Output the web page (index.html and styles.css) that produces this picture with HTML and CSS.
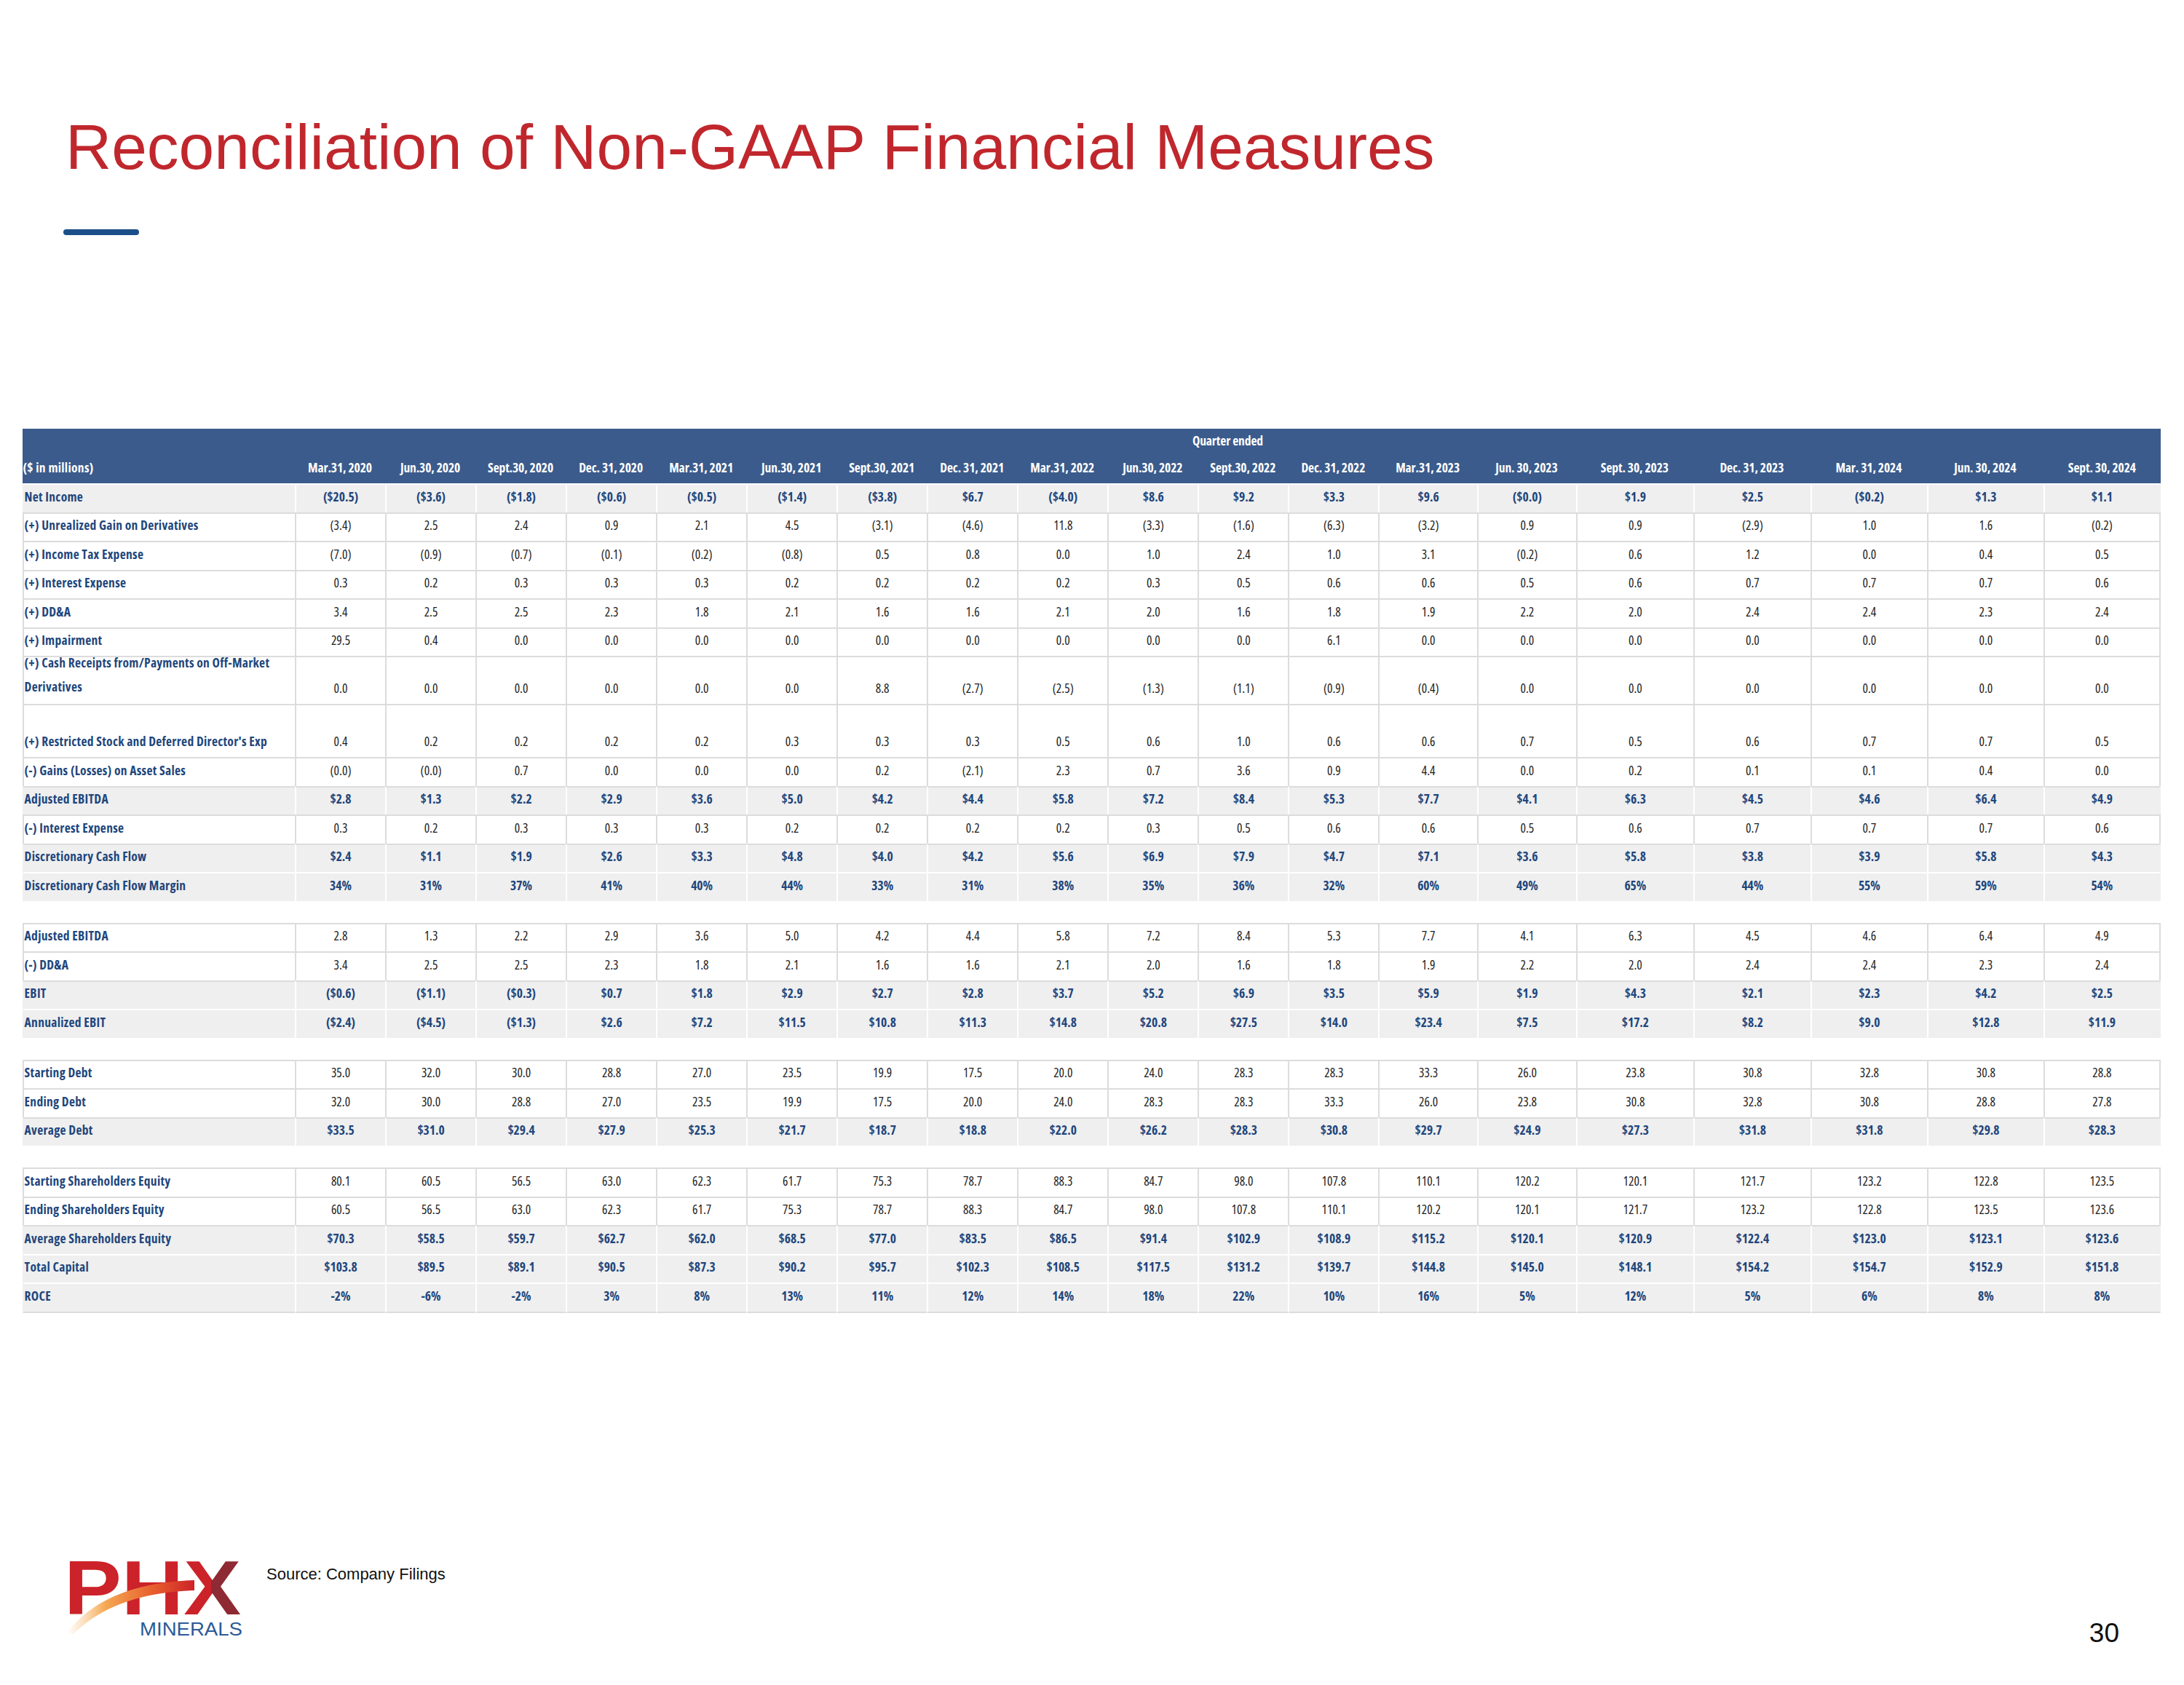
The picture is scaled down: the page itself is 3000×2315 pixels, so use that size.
FILE: index.html
```html
<!DOCTYPE html>
<html lang="en">
<head>
<meta charset="utf-8">
<title>Reconciliation of Non-GAAP Financial Measures</title>
<link rel="stylesheet" href="styles.css">
</head>
<body>
<div class="slide">
  <h1 class="title">Reconciliation of Non-GAAP Financial Measures</h1>
  <div class="rule"></div>

  <div class="tbl">
    <div class="hd">
      <div class="hr1"><div class="qe">Quarter ended</div></div>
      <div class="hr2">
        <div class="l">($ in millions)</div>
        <div>Mar.31, 2020</div><div>Jun.30, 2020</div><div>Sept.30, 2020</div><div>Dec. 31, 2020</div>
        <div>Mar.31, 2021</div><div>Jun.30, 2021</div><div>Sept.30, 2021</div><div>Dec. 31, 2021</div>
        <div>Mar.31, 2022</div><div>Jun.30, 2022</div><div>Sept.30, 2022</div><div>Dec. 31, 2022</div>
        <div>Mar.31, 2023</div><div>Jun. 30, 2023</div><div>Sept. 30, 2023</div><div>Dec. 31, 2023</div>
        <div>Mar. 31, 2024</div><div>Jun. 30, 2024</div><div>Sept. 30, 2024</div>
      </div>
    </div>

    <div class="r g w"><div class="l">Net Income</div><div>($20.5)</div><div>($3.6)</div><div>($1.8)</div><div>($0.6)</div><div>($0.5)</div><div>($1.4)</div><div>($3.8)</div><div>$6.7</div><div>($4.0)</div><div>$8.6</div><div>$9.2</div><div>$3.3</div><div>$9.6</div><div>($0.0)</div><div>$1.9</div><div>$2.5</div><div>($0.2)</div><div>$1.3</div><div>$1.1</div></div>
    <div class="r"><div class="l">(+) Unrealized Gain on Derivatives</div><div>(3.4)</div><div>2.5</div><div>2.4</div><div>0.9</div><div>2.1</div><div>4.5</div><div>(3.1)</div><div>(4.6)</div><div>11.8</div><div>(3.3)</div><div>(1.6)</div><div>(6.3)</div><div>(3.2)</div><div>0.9</div><div>0.9</div><div>(2.9)</div><div>1.0</div><div>1.6</div><div>(0.2)</div></div>
    <div class="r"><div class="l">(+) Income Tax Expense</div><div>(7.0)</div><div>(0.9)</div><div>(0.7)</div><div>(0.1)</div><div>(0.2)</div><div>(0.8)</div><div>0.5</div><div>0.8</div><div>0.0</div><div>1.0</div><div>2.4</div><div>1.0</div><div>3.1</div><div>(0.2)</div><div>0.6</div><div>1.2</div><div>0.0</div><div>0.4</div><div>0.5</div></div>
    <div class="r"><div class="l">(+) Interest Expense</div><div>0.3</div><div>0.2</div><div>0.3</div><div>0.3</div><div>0.3</div><div>0.2</div><div>0.2</div><div>0.2</div><div>0.2</div><div>0.3</div><div>0.5</div><div>0.6</div><div>0.6</div><div>0.5</div><div>0.6</div><div>0.7</div><div>0.7</div><div>0.7</div><div>0.6</div></div>
    <div class="r"><div class="l">(+) DD&amp;A</div><div>3.4</div><div>2.5</div><div>2.5</div><div>2.3</div><div>1.8</div><div>2.1</div><div>1.6</div><div>1.6</div><div>2.1</div><div>2.0</div><div>1.6</div><div>1.8</div><div>1.9</div><div>2.2</div><div>2.0</div><div>2.4</div><div>2.4</div><div>2.3</div><div>2.4</div></div>
    <div class="r"><div class="l">(+) Impairment</div><div>29.5</div><div>0.4</div><div>0.0</div><div>0.0</div><div>0.0</div><div>0.0</div><div>0.0</div><div>0.0</div><div>0.0</div><div>0.0</div><div>0.0</div><div>6.1</div><div>0.0</div><div>0.0</div><div>0.0</div><div>0.0</div><div>0.0</div><div>0.0</div><div>0.0</div></div>
    <div class="r tall"><div class="l">(+) Cash Receipts from/Payments on Off-Market<br>Derivatives</div><div>0.0</div><div>0.0</div><div>0.0</div><div>0.0</div><div>0.0</div><div>0.0</div><div>8.8</div><div>(2.7)</div><div>(2.5)</div><div>(1.3)</div><div>(1.1)</div><div>(0.9)</div><div>(0.4)</div><div>0.0</div><div>0.0</div><div>0.0</div><div>0.0</div><div>0.0</div><div>0.0</div></div>
    <div class="r rs"><div class="l">(+) Restricted Stock and Deferred Director's Exp</div><div>0.4</div><div>0.2</div><div>0.2</div><div>0.2</div><div>0.2</div><div>0.3</div><div>0.3</div><div>0.3</div><div>0.5</div><div>0.6</div><div>1.0</div><div>0.6</div><div>0.6</div><div>0.7</div><div>0.5</div><div>0.6</div><div>0.7</div><div>0.7</div><div>0.5</div></div>
    <div class="r"><div class="l">(-) Gains (Losses) on Asset Sales</div><div>(0.0)</div><div>(0.0)</div><div>0.7</div><div>0.0</div><div>0.0</div><div>0.0</div><div>0.2</div><div>(2.1)</div><div>2.3</div><div>0.7</div><div>3.6</div><div>0.9</div><div>4.4</div><div>0.0</div><div>0.2</div><div>0.1</div><div>0.1</div><div>0.4</div><div>0.0</div></div>
    <div class="r g"><div class="l">Adjusted EBITDA</div><div>$2.8</div><div>$1.3</div><div>$2.2</div><div>$2.9</div><div>$3.6</div><div>$5.0</div><div>$4.2</div><div>$4.4</div><div>$5.8</div><div>$7.2</div><div>$8.4</div><div>$5.3</div><div>$7.7</div><div>$4.1</div><div>$6.3</div><div>$4.5</div><div>$4.6</div><div>$6.4</div><div>$4.9</div></div>
    <div class="r"><div class="l">(-) Interest Expense</div><div>0.3</div><div>0.2</div><div>0.3</div><div>0.3</div><div>0.3</div><div>0.2</div><div>0.2</div><div>0.2</div><div>0.2</div><div>0.3</div><div>0.5</div><div>0.6</div><div>0.6</div><div>0.5</div><div>0.6</div><div>0.7</div><div>0.7</div><div>0.7</div><div>0.6</div></div>
    <div class="r g"><div class="l">Discretionary Cash Flow</div><div>$2.4</div><div>$1.1</div><div>$1.9</div><div>$2.6</div><div>$3.3</div><div>$4.8</div><div>$4.0</div><div>$4.2</div><div>$5.6</div><div>$6.9</div><div>$7.9</div><div>$4.7</div><div>$7.1</div><div>$3.6</div><div>$5.8</div><div>$3.8</div><div>$3.9</div><div>$5.8</div><div>$4.3</div></div>
    <div class="r g w"><div class="l">Discretionary Cash Flow Margin</div><div>34%</div><div>31%</div><div>37%</div><div>41%</div><div>40%</div><div>44%</div><div>33%</div><div>31%</div><div>38%</div><div>35%</div><div>36%</div><div>32%</div><div>60%</div><div>49%</div><div>65%</div><div>44%</div><div>55%</div><div>59%</div><div>54%</div></div>

    <div class="sp"></div>

    <div class="r"><div class="l">Adjusted EBITDA</div><div>2.8</div><div>1.3</div><div>2.2</div><div>2.9</div><div>3.6</div><div>5.0</div><div>4.2</div><div>4.4</div><div>5.8</div><div>7.2</div><div>8.4</div><div>5.3</div><div>7.7</div><div>4.1</div><div>6.3</div><div>4.5</div><div>4.6</div><div>6.4</div><div>4.9</div></div>
    <div class="r"><div class="l">(-) DD&amp;A</div><div>3.4</div><div>2.5</div><div>2.5</div><div>2.3</div><div>1.8</div><div>2.1</div><div>1.6</div><div>1.6</div><div>2.1</div><div>2.0</div><div>1.6</div><div>1.8</div><div>1.9</div><div>2.2</div><div>2.0</div><div>2.4</div><div>2.4</div><div>2.3</div><div>2.4</div></div>
    <div class="r g"><div class="l">EBIT</div><div>($0.6)</div><div>($1.1)</div><div>($0.3)</div><div>$0.7</div><div>$1.8</div><div>$2.9</div><div>$2.7</div><div>$2.8</div><div>$3.7</div><div>$5.2</div><div>$6.9</div><div>$3.5</div><div>$5.9</div><div>$1.9</div><div>$4.3</div><div>$2.1</div><div>$2.3</div><div>$4.2</div><div>$2.5</div></div>
    <div class="r g w"><div class="l">Annualized EBIT</div><div>($2.4)</div><div>($4.5)</div><div>($1.3)</div><div>$2.6</div><div>$7.2</div><div>$11.5</div><div>$10.8</div><div>$11.3</div><div>$14.8</div><div>$20.8</div><div>$27.5</div><div>$14.0</div><div>$23.4</div><div>$7.5</div><div>$17.2</div><div>$8.2</div><div>$9.0</div><div>$12.8</div><div>$11.9</div></div>

    <div class="sp"></div>

    <div class="r"><div class="l">Starting Debt</div><div>35.0</div><div>32.0</div><div>30.0</div><div>28.8</div><div>27.0</div><div>23.5</div><div>19.9</div><div>17.5</div><div>20.0</div><div>24.0</div><div>28.3</div><div>28.3</div><div>33.3</div><div>26.0</div><div>23.8</div><div>30.8</div><div>32.8</div><div>30.8</div><div>28.8</div></div>
    <div class="r"><div class="l">Ending Debt</div><div>32.0</div><div>30.0</div><div>28.8</div><div>27.0</div><div>23.5</div><div>19.9</div><div>17.5</div><div>20.0</div><div>24.0</div><div>28.3</div><div>28.3</div><div>33.3</div><div>26.0</div><div>23.8</div><div>30.8</div><div>32.8</div><div>30.8</div><div>28.8</div><div>27.8</div></div>
    <div class="r g"><div class="l">Average Debt</div><div>$33.5</div><div>$31.0</div><div>$29.4</div><div>$27.9</div><div>$25.3</div><div>$21.7</div><div>$18.7</div><div>$18.8</div><div>$22.0</div><div>$26.2</div><div>$28.3</div><div>$30.8</div><div>$29.7</div><div>$24.9</div><div>$27.3</div><div>$31.8</div><div>$31.8</div><div>$29.8</div><div>$28.3</div></div>

    <div class="sp"></div>

    <div class="r"><div class="l">Starting Shareholders Equity</div><div>80.1</div><div>60.5</div><div>56.5</div><div>63.0</div><div>62.3</div><div>61.7</div><div>75.3</div><div>78.7</div><div>88.3</div><div>84.7</div><div>98.0</div><div>107.8</div><div>110.1</div><div>120.2</div><div>120.1</div><div>121.7</div><div>123.2</div><div>122.8</div><div>123.5</div></div>
    <div class="r"><div class="l">Ending Shareholders Equity</div><div>60.5</div><div>56.5</div><div>63.0</div><div>62.3</div><div>61.7</div><div>75.3</div><div>78.7</div><div>88.3</div><div>84.7</div><div>98.0</div><div>107.8</div><div>110.1</div><div>120.2</div><div>120.1</div><div>121.7</div><div>123.2</div><div>122.8</div><div>123.5</div><div>123.6</div></div>
    <div class="r g"><div class="l">Average Shareholders Equity</div><div>$70.3</div><div>$58.5</div><div>$59.7</div><div>$62.7</div><div>$62.0</div><div>$68.5</div><div>$77.0</div><div>$83.5</div><div>$86.5</div><div>$91.4</div><div>$102.9</div><div>$108.9</div><div>$115.2</div><div>$120.1</div><div>$120.9</div><div>$122.4</div><div>$123.0</div><div>$123.1</div><div>$123.6</div></div>
    <div class="r g w"><div class="l">Total Capital</div><div>$103.8</div><div>$89.5</div><div>$89.1</div><div>$90.5</div><div>$87.3</div><div>$90.2</div><div>$95.7</div><div>$102.3</div><div>$108.5</div><div>$117.5</div><div>$131.2</div><div>$139.7</div><div>$144.8</div><div>$145.0</div><div>$148.1</div><div>$154.2</div><div>$154.7</div><div>$152.9</div><div>$151.8</div></div>
    <div class="r g w last"><div class="l">ROCE</div><div>-2%</div><div>-6%</div><div>-2%</div><div>3%</div><div>8%</div><div>13%</div><div>11%</div><div>12%</div><div>14%</div><div>18%</div><div>22%</div><div>10%</div><div>16%</div><div>5%</div><div>12%</div><div>5%</div><div>6%</div><div>8%</div><div>8%</div></div>
  </div>

  <div class="foot">
    <svg class="logo" width="245" height="120" viewBox="0 0 245 120" aria-label="PHX Minerals">
      <defs>
        <linearGradient id="phx" x1="0" y1="0" x2="1" y2="0">
          <stop offset="0" stop-color="#CC2229"/>
          <stop offset="0.83" stop-color="#CC2229"/>
          <stop offset="0.83" stop-color="#8E2A33"/>
          <stop offset="1" stop-color="#8E2A33"/>
        </linearGradient>
        <linearGradient id="sw" x1="0" y1="0" x2="1" y2="0">
          <stop offset="0" stop-color="#F8C27E" stop-opacity="0"/>
          <stop offset="0.3" stop-color="#F5A853"/>
          <stop offset="0.7" stop-color="#E65A2C"/>
          <stop offset="1" stop-color="#CC2229"/>
        </linearGradient>
      </defs>
      <text x="-4" y="83" class="phx" textLength="243" lengthAdjust="spacingAndGlyphs" fill="url(#phx)">PHX</text>
      <path d="M0 108 Q 52 40 175 36 L 175 50 Q 64 54 9 110 Z" fill="url(#sw)"/>
      <text x="100" y="112" class="min" textLength="141" lengthAdjust="spacingAndGlyphs">MINERALS</text>
    </svg>
    <div class="src">Source: Company Filings</div>
    <div class="pg">30</div>
  </div>
</div>
</body>
</html>
```
FILE: styles.css
```css
:root {
  --line: #DCDCDC;
  --gray: #EFEFEF;
  --navy: #21467C;
  --cols: 374.4px repeat(12, 124.04px) 135.5px 136px 161px 161px 160px 160px 161px;
}
* { box-sizing: border-box; }
body {
  margin: 0;
  background: #fff;
  font-family: "Liberation Sans", Arial, sans-serif;
}
.slide {
  width: 3000px;
  height: 2315px;
  overflow: hidden;
}
.title {
  margin: 159px 0 0 90px;
  font-size: 87.5px;
  line-height: 86px;
  font-weight: normal;
  color: #C0272D;
  white-space: nowrap;
}
.rule {
  width: 104px;
  height: 8px;
  border-radius: 4px;
  background: #1B4F8A;
  margin: 70px 0 0 87px;
}

.tbl {
  margin: 266px 0 0 30.6px;
  width: 2937.4px;
  font-family: "Open Sans", "Liberation Sans", sans-serif;
  font-stretch: 75%;
  font-size: 17.5px;
  letter-spacing: 0;
}
.hd { background: #3B5B8C; color: #fff; font-weight: bold; }
.hr1 {
  display: grid;
  grid-template-columns: var(--cols);
  height: 31px;
  align-items: center;
}
.qe { grid-column: 2 / -1; text-align: center; letter-spacing: -0.1px; }
.hr2 {
  display: grid;
  grid-template-columns: var(--cols);
  height: 44px;
}
.hr2 > div {
  display: flex;
  align-items: flex-end;
  justify-content: center;
  padding-bottom: 12px;
  line-height: 20px;
  white-space: nowrap;
  letter-spacing: -0.1px;
}
.hr2 > .l { justify-content: flex-start; padding-left: 1px; letter-spacing: 0.3px; }

.r {
  display: grid;
  grid-template-columns: var(--cols);
  grid-template-rows: minmax(0, 1fr);
  height: 39.5px;
}
.r > div {
  display: flex;
  align-items: flex-end;
  justify-content: center;
  padding-bottom: 12px;
  line-height: 20px;
  border-top: 2px solid var(--line);
  border-left: 2px solid var(--line);
  white-space: nowrap;
  color: #1E1E1E;
}
.r > div:last-child { border-right: 2px solid var(--line); }
.r > .l {
  justify-content: flex-start;
  color: var(--navy);
  font-weight: bold;
  padding-left: 1px;
  letter-spacing: 0.3px;
}
.g > div {
  background: var(--gray);
  border-left-color: #fff;
  color: var(--navy);
  font-weight: bold;
}
.g > div:first-child { border-left-color: var(--gray); }
.g > div:last-child { border-right-color: var(--gray); }
.w > div { border-top-color: #fff; }
.sp { height: 30px; }
.tall { height: 66px; }
.tall > .l {
  line-height: 33px;
  padding-bottom: 7.5px;
}
.rs { height: 73px; }
.last { height: 41.5px; }
.last > div { border-bottom: 2px solid var(--line); }

.foot {
  display: flex;
  align-items: flex-start;
  margin-top: 331.5px;
  padding-left: 92px;
}
.logo { display: block; overflow: visible; }
.phx {
  font-family: "Liberation Sans", Arial, sans-serif;
  font-weight: bold;
  font-size: 105px;
}
.min {
  font-family: "Liberation Sans", Arial, sans-serif;
  font-size: 26.5px;
  fill: #2C5A97;
}
.src {
  margin: 14.5px 0 0 29px;
  font-size: 22px;
  line-height: 26px;
  color: #111;
}
.pg {
  margin: 90px 89px 0 auto;
  font-size: 37px;
  line-height: 37px;
  color: #111;
}
```
